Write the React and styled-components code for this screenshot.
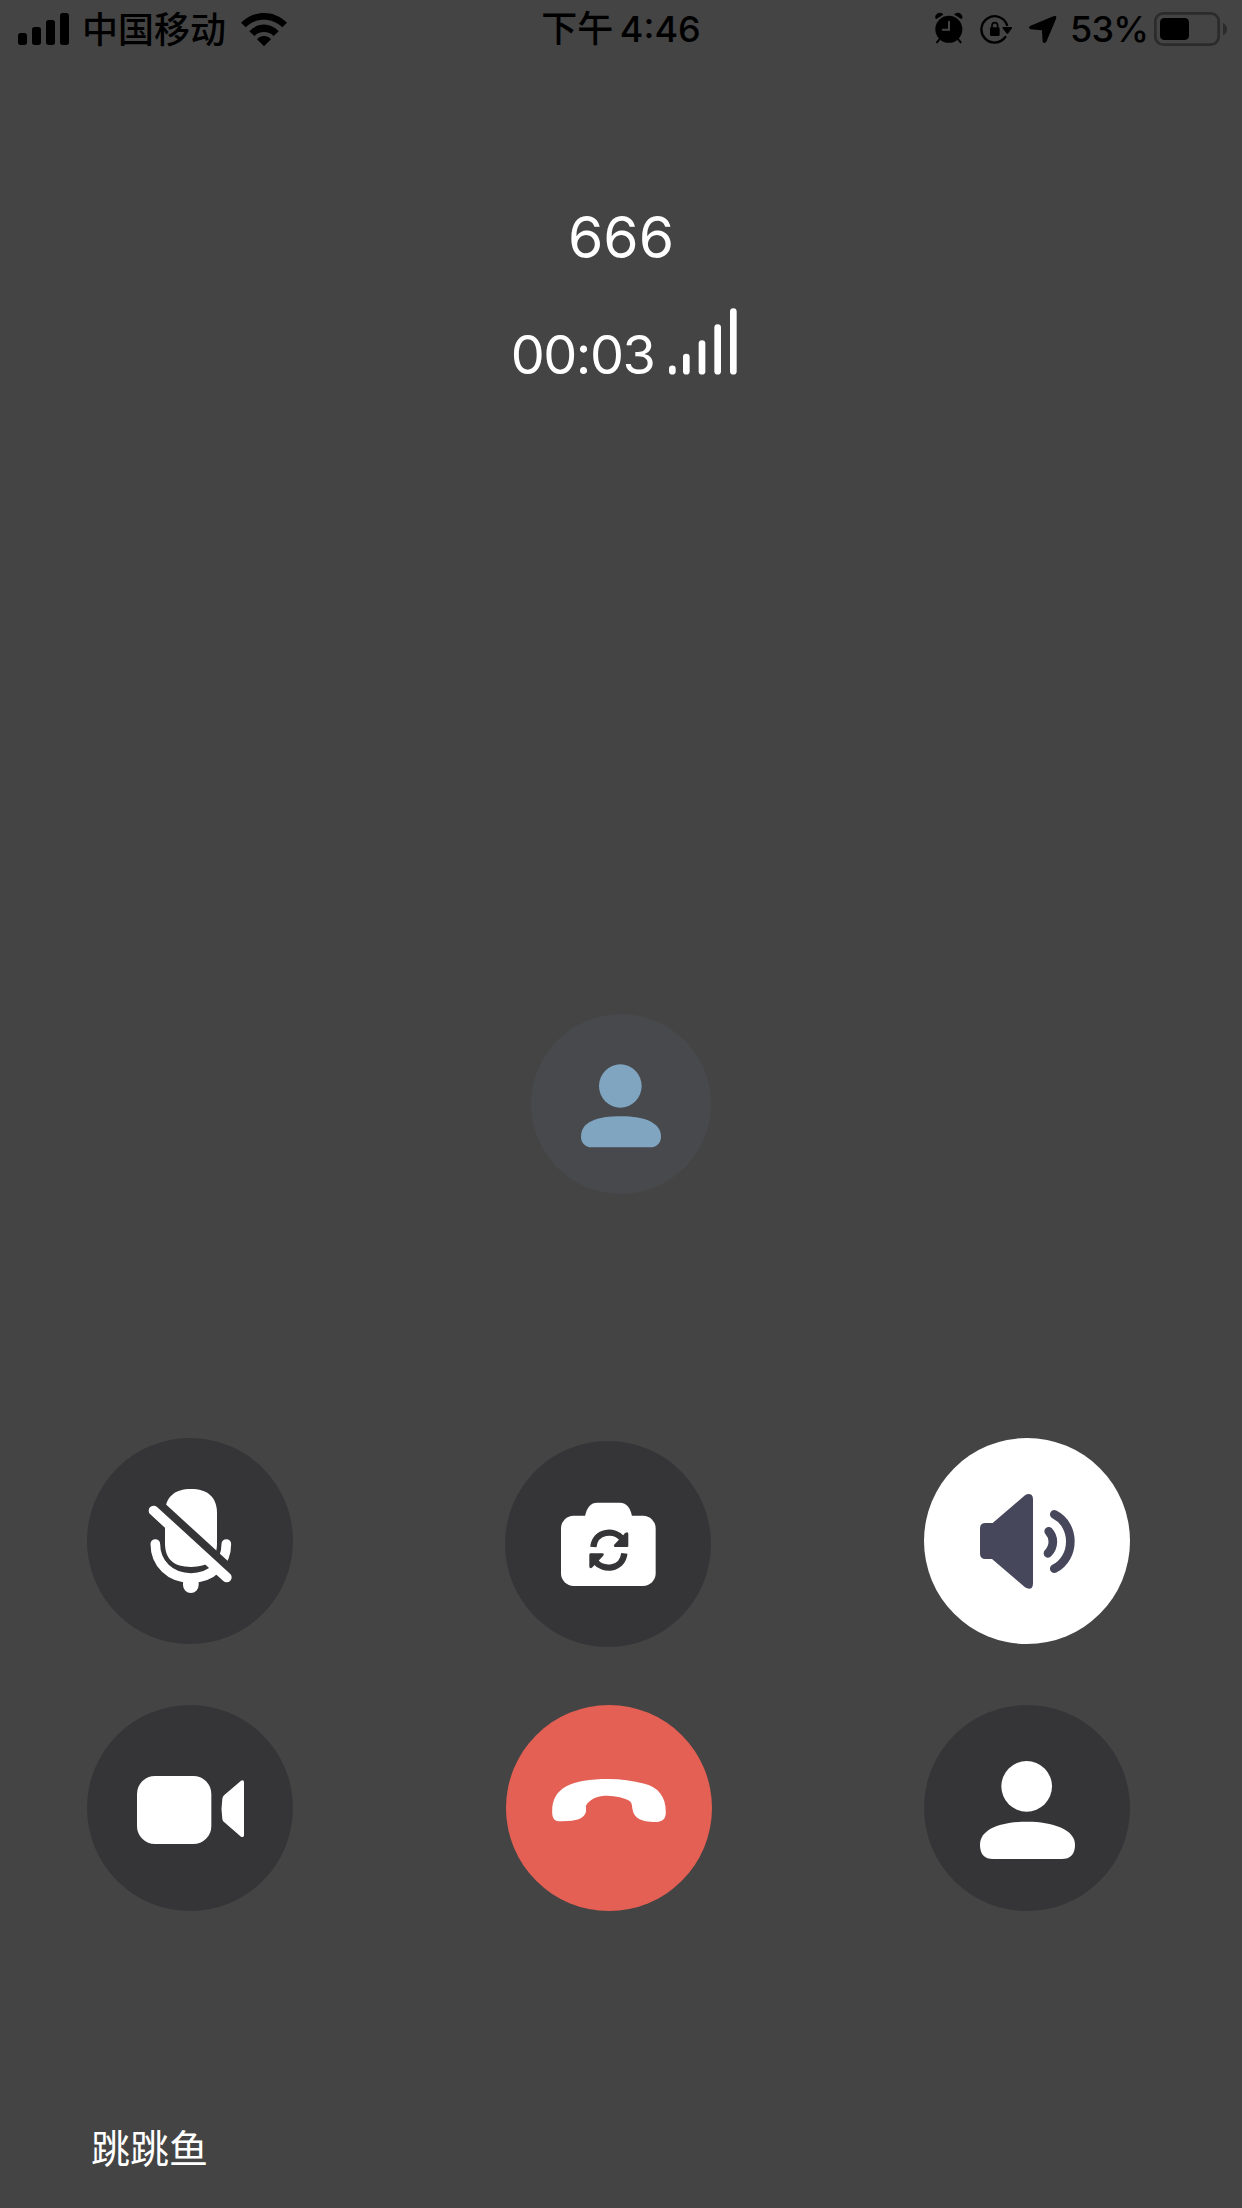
import React from 'react';
import styled, { createGlobalStyle } from 'styled-components';

const GlobalStyle = createGlobalStyle`
  * {
    box-sizing: border-box;
  }

  body {
    margin: 0;
    background: #444444;
    font-family: Inter, 'Noto Sans CJK SC', sans-serif;
  }

  svg {
    display: block;
    flex: none;
  }
`;

const Screen = styled.div`
  display: flex;
  flex-direction: column;
  width: 1242px;
  height: 2208px;
  overflow: hidden;
  background: #444444;
  color: #fff;
`;

const StatusBar = styled.header`
  display: grid;
  grid-template-columns: 1fr auto 1fr;
  height: 60px;
  padding: 0 15px 0 18px;
  color: #000;
`;

const StatusGroup = styled.div`
  display: flex;
  align-items: center;
  justify-content: ${({ $end }) => ($end ? 'flex-end' : 'flex-start')};
`;

const StatusIcons = styled.div`
  display: flex;
  gap: 17px;
`;

const StatusText = styled.span`
  font-size: 36px;
  line-height: 58px;
  font-weight: 500;
  white-space: nowrap;
`;

const Carrier = styled(StatusText)`
  margin: 0 15px 0 13px;
`;

const Clock = styled(StatusText)`
  margin-right: 3px;
  word-spacing: -3px;
`;

const BatteryLevel = styled(StatusText)`
  margin: 0 6px 0 13px;
  padding-bottom: 2px;
  font-weight: 450;
  letter-spacing: -0.9px;
`;

const CallInfo = styled.section`
  display: flex;
  flex-direction: column;
  align-items: center;
  padding-top: 143px;
`;

const CallName = styled.h1`
  margin: 0;
  font-size: 57px;
  line-height: 70px;
  font-weight: 400;
`;

const TimerRow = styled.div`
  display: flex;
  align-items: flex-end;
  gap: 14.5px;
  margin: 35px 0 0 5.5px;
`;

const Timer = styled.span`
  font-size: 54px;
  line-height: 40px;
  height: 40px;
  letter-spacing: -1.5px;
`;

const AvatarArea = styled.section`
  display: flex;
  justify-content: center;
  margin-top: 639px;
`;

const Avatar = styled.div`
  width: 180px;
  height: 180px;
  border-radius: 50%;
  background: #48494c;
  color: #7fa5c0;
`;

const Controls = styled.section`
  display: grid;
  grid-template-columns: repeat(3, 206px);
  column-gap: 212.5px;
  row-gap: 61px;
  margin: 244px 0 0 87px;
`;

const RoundButton = styled.button`
  width: 206px;
  height: 206px;
  margin: ${({ $margin }) => $margin || 0};
  padding: 0;
  border: 0;
  border-radius: 50%;
  background: ${({ $bg }) => $bg || '#353537'};
  color: ${({ $fg }) => $fg || '#fff'};
`;

const Caption = styled.footer`
  margin: 208px 0 0 91px;
  font-size: 39px;
  line-height: 60px;
`;

const StatusIcon = ({ x, w, children }) => (
  <svg width={w / 3} height="60" viewBox={`${x} 0 ${w} 180`} fill="currentColor">
    {children}
  </svg>
);

const ButtonIcon = ({ x, y, size = 618, children }) => (
  <svg width={size / 3} height={size / 3} viewBox={`${x} ${y} ${size} ${size}`} fill="currentColor">
    {children}
  </svg>
);

const CellSignal = () => (
  <StatusIcon x={54} w={153}>
    <rect x="54" y="99" width="27" height="36" rx="8" />
    <rect x="96" y="81" width="27" height="54" rx="8" />
    <rect x="138" y="60" width="27" height="75" rx="8" />
    <rect x="180" y="39" width="27" height="96" rx="8" />
  </StatusIcon>
);

const Wifi = () => (
  <StatusIcon x={723} w={138}>
    <path d="M723 68C762 29 822 29 861 68L847 82C816 52 768 52 737 82Z" />
    <path d="M748 94C773 67 811 67 836 94L821 108C805 92 779 92 763 108Z" />
    <path d="M771 118C783 105 801 105 813 118L792 139Z" />
  </StatusIcon>
);

const Alarm = () => (
  <StatusIcon x={50} w={84}>
    <circle cx="91.500" cy="88" r="40.500" />
    <path d="M53 56C49 43 62 35 74 43ZM130 56C134 43 121 35 109 43Z" stroke="currentColor" strokeWidth="3" strokeLinejoin="round" />
    <path d="M64 117L56 127M119 117L127 127" stroke="currentColor" strokeWidth="6" strokeLinecap="round" />
    <path d="M92 65V89H73" fill="none" stroke="#444" strokeWidth="6" strokeLinecap="round" />
  </StatusIcon>
);

const RotationLock = () => (
  <StatusIcon x={185} w={98}>
    <path d="M261 111A39.500 39.500 0 1 1 266 75" fill="none" stroke="currentColor" strokeWidth="7" strokeLinecap="round" />
    <path d="M255 81H280Q284 81 281 85L270 100Q267 103 264 100L253 85Q250 81 255 81Z" />
    <rect x="215" y="82" width="29" height="26" rx="4" />
    <path d="M221 84V77A8.500 9 0 0 1 238 77V84" fill="none" stroke="currentColor" strokeWidth="5" />
  </StatusIcon>
);

const Location = () => (
  <StatusIcon x={332} w={83}>
    <path d="M405 49Q417 44 413 57L384 125Q378 133 373 125L371 91L337 88Q328 84 335 78Z" />
  </StatusIcon>
);

const Battery = () => (
  <StatusIcon x={702} w={219}>
    <rect x="706" y="40" width="190" height="94" rx="24" fill="none" stroke="#2b2b2b" strokeWidth="8" />
    <rect x="720" y="54" width="87" height="66" rx="13" />
    <path d="M909 69Q921 75 921 88T909 106Z" fill="#2b2b2b" />
  </StatusIcon>
);

const CallQuality = () => (
  <svg width="68" height="67" viewBox="537 354 204 200" fill="currentColor">
    <rect x="537" y="526" width="20" height="27" rx="10" />
    <rect x="579" y="491" width="20" height="62" rx="10" />
    <rect x="626" y="450" width="20" height="103" rx="10" />
    <rect x="673" y="402" width="20" height="151" rx="10" />
    <rect x="720" y="354" width="20" height="199" rx="10" />
  </svg>
);

const AvatarIcon = () => (
  <ButtonIcon x={33} y={41} size={540}>
    <ellipse cx="301" cy="257" rx="64" ry="65" />
    <path d="M215 441C195 441 183 427 183 409C183 365 230 348 303 348C376 348 423 368 423 409C423 427 410 441 392 441Z" />
  </ButtonIcon>
);

const MicOff = () => (
  <ButtonIcon x={21} y={24}>
    <path d="M255 250C255 200 285 177 333 177S411 200 411 250V340C411 388 385 411 333 411S255 388 255 340Z" />
    <path d="M226 342C226 400 270 444 333 444S439 400 439 342" fill="none" stroke="currentColor" strokeWidth="29" strokeLinecap="round" />
    <path d="M309 450V465A23.500 24 0 0 0 356 465V450Z" />
    <path d="M201 189L480 444" stroke="#353537" strokeWidth="26" />
    <path d="M221 242L440 442" stroke="currentColor" strokeWidth="30" strokeLinecap="round" />
  </ButtonIcon>
);

const SwitchArrow = () => (
  <>
    <path d="M280 351C286 300 344 298 368 327" fill="none" stroke="#353537" strokeWidth="19" />
    <path d="M385 312V347Q385 351 381 351H346Q338 350 344 343L375 310Q384 302 385 312Z" fill="#353537" />
  </>
);

const SwitchCamera = () => (
  <ButtonIcon x={15} y={33}>
    <rect x="183" y="257" width="284" height="211" rx="38" />
    <path d="M255 259C260 232 272 218 292 218H360C380 218 392 235 396 259Z" />
    <SwitchArrow />
    <g transform="rotate(180 326.500 360.500)">
      <SwitchArrow />
    </g>
  </ButtonIcon>
);

const Speaker = () => (
  <ButtonIcon x={27} y={24}>
    <path d="M211 279H233L330 196Q341 189 350 195Q354 199 354 208V460Q354 470 350 474Q341 479 330 472L231 387H211Q195 386 195 371V295Q195 279 211 279Z" />
    <path d="M401 304C418 322 418 350 399 370M418 253C482 285 482 383 418 416" fill="none" stroke="currentColor" strokeWidth="26" strokeLinecap="round" />
  </ButtonIcon>
);

const Video = () => (
  <ButtonIcon x={21} y={15}>
    <rect x="171" y="228" width="223" height="204" rx="54" />
    <path d="M433 285L483 242Q492 238 492 247V406Q492 414 483 410L433 367Q428 364 427 357Q422 326 427 296Q428 289 433 285Z" />
  </ButtonIcon>
);

const HangUp = () => (
  <ButtonIcon x={18.5} y={15}>
    <path d="M157 335C157 262 215 237 326 237C363 237 398 243 434 251C475 261 498 290 498 335C498 358 488 366 464 366C425 366 402 355 398 328C396 315 397 308 388 302C365 289 335 287 315 287C295 287 268 298 259 316C257 322 260 328 258 337C250 358 232 363 187 364C165 365 157 357 157 335Z" />
  </ButtonIcon>
);

const Person = () => (
  <ButtonIcon x={27} y={15}>
    <circle cx="335" cy="259" r="76" />
    <path d="M235 477C208 477 195 462 195 434C195 385 262 365 337 365S480 388 480 434C480 462 466 477 440 477Z" />
  </ButtonIcon>
);

const controls = [
  { id: 'mute', Icon: MicOff },
  { id: 'camera', Icon: SwitchCamera, margin: '3px 0 -3px -0.5px' },
  { id: 'speaker', Icon: Speaker, bg: '#fff', fg: '#47475c' },
  { id: 'video', Icon: Video },
  { id: 'hangup', Icon: HangUp, bg: '#e46054' },
  { id: 'members', Icon: Person },
];

export default function App() {
  return (
    <Screen>
      <GlobalStyle />
      <StatusBar>
        <StatusGroup>
          <CellSignal />
          <Carrier>中国移动</Carrier>
          <Wifi />
        </StatusGroup>
        <Clock>下午 4:46</Clock>
        <StatusGroup $end>
          <StatusIcons>
            <Alarm />
            <RotationLock />
            <Location />
          </StatusIcons>
          <BatteryLevel>53%</BatteryLevel>
          <Battery />
        </StatusGroup>
      </StatusBar>

      <CallInfo>
        <CallName>666</CallName>
        <TimerRow>
          <Timer>00:03</Timer>
          <CallQuality />
        </TimerRow>
      </CallInfo>

      <AvatarArea>
        <Avatar>
          <AvatarIcon />
        </Avatar>
      </AvatarArea>

      <Controls>
        {controls.map(({ id, Icon, bg, fg, margin }) => (
          <RoundButton key={id} $bg={bg} $fg={fg} $margin={margin}>
            <Icon />
          </RoundButton>
        ))}
      </Controls>

      <Caption>跳跳鱼</Caption>
    </Screen>
  );
}
